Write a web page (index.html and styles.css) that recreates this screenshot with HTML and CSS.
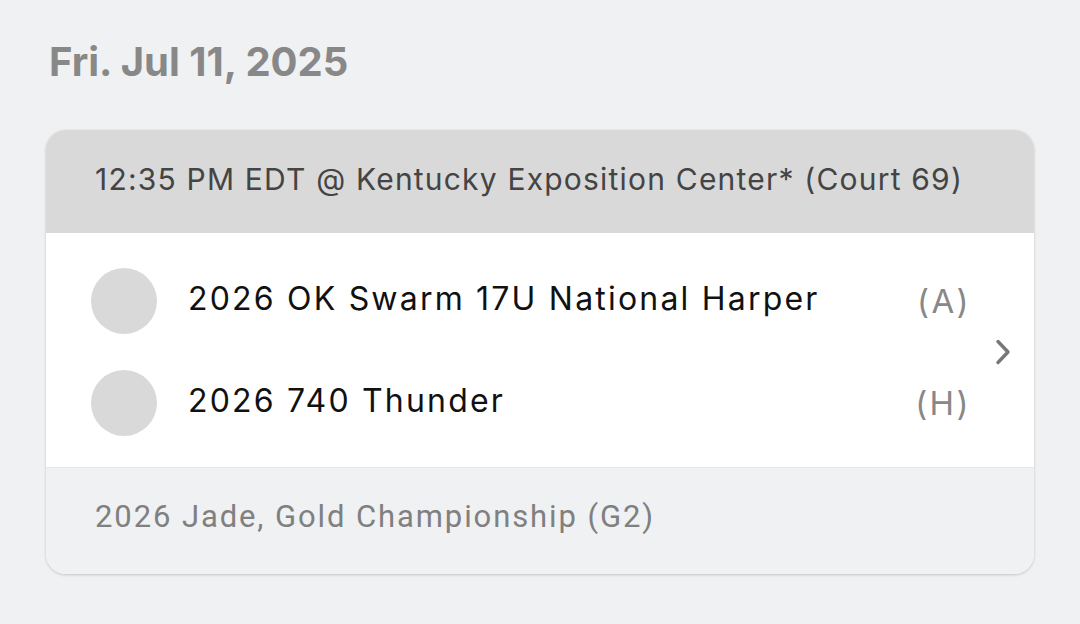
FILE: index.html
```html
<!DOCTYPE html>
<html>
<head>
<meta charset="utf-8">
<link rel="stylesheet" href="styles.css">
</head>
<body>
<div class="page">
  <h1 class="date">Fri. Jul 11, 2025</h1>
  <div class="card">
    <div class="card-head">12:35 PM EDT @ Kentucky Exposition Center* (Court 69)</div>
    <div class="card-body">
      <div class="teams">
        <div class="team">
          <span class="avatar"></span>
          <span class="name">2026 OK Swarm 17U National Harper</span>
          <span class="side">(A)</span>
        </div>
        <div class="team">
          <span class="avatar"></span>
          <span class="name">2026 740 Thunder</span>
          <span class="side">(H)</span>
        </div>
      </div>
      <svg class="chev" width="18" height="28" viewBox="0 0 18 28"><path d="M4 3.5 L14 14 L4 24.5" fill="none" stroke="#777" stroke-width="3.4" stroke-linecap="round" stroke-linejoin="round"/></svg>
    </div>
    <div class="card-foot">2026 Jade, Gold Championship (G2)</div>
  </div>
</div>
</body>
</html>
```
FILE: styles.css
```css
html, body {
  margin: 0;
  padding: 0;
  background: #f0f1f3;
}
body {
  width: 1080px;
  height: 624px;
  overflow: hidden;
  font-family: "Inter", "Noto Sans", sans-serif;
}
.page {
  padding: 36px 46px 0 46px;
}
.date {
  margin: 0 0 0 3px;
  font-size: 40px;
  font-weight: 700;
  color: #888888;
  line-height: 52px;
}
.card {
  margin-top: 42px;
  width: 988px;
  border-radius: 20px;
  overflow: hidden;
  background: #fff;
  box-shadow: 0 1px 3px rgba(0,0,0,0.18), 0 0 1px rgba(0,0,0,0.1);
}
.card-head {
  height: 103px;
  box-sizing: border-box;
  padding: 0 0 6px 49px;
  display: flex;
  align-items: center;
  background: #d9d9d9;
  color: #444;
  font-size: 30px;
  letter-spacing: 1.2px;
}
.card-body {
  height: 235px;
  display: flex;
  align-items: center;
  background: #fff;
  border-bottom: 1px solid #e6e6e6;
  box-sizing: border-box;
  padding-top: 3px;
}
.teams {
  flex: 1;
  display: flex;
  flex-direction: column;
  gap: 36px;
  padding-left: 45px;
}
.team {
  display: flex;
  align-items: center;
  height: 66px;
}
.avatar {
  width: 66px;
  height: 66px;
  border-radius: 50%;
  background: #d9d9d9;
  flex: none;
}
.name {
  flex: 1;
  margin-left: 31px;
  margin-top: -4px;
  font-size: 32px;
  letter-spacing: 2.2px;
  color: #111;
}
.side {
  font-size: 33px;
  letter-spacing: 2.4px;
  color: #888;
  margin-right: 1px;
}
.chev {
  margin: 0 22px 0 22px;
}
.card-foot {
  height: 106px;
  box-sizing: border-box;
  display: flex;
  align-items: center;
  padding: 0 0 10px 49px;
  background: #f0f1f3;
  color: #808080;
  font-family: "Roboto", sans-serif;
  font-size: 31px;
  letter-spacing: 1.9px;
}
```
